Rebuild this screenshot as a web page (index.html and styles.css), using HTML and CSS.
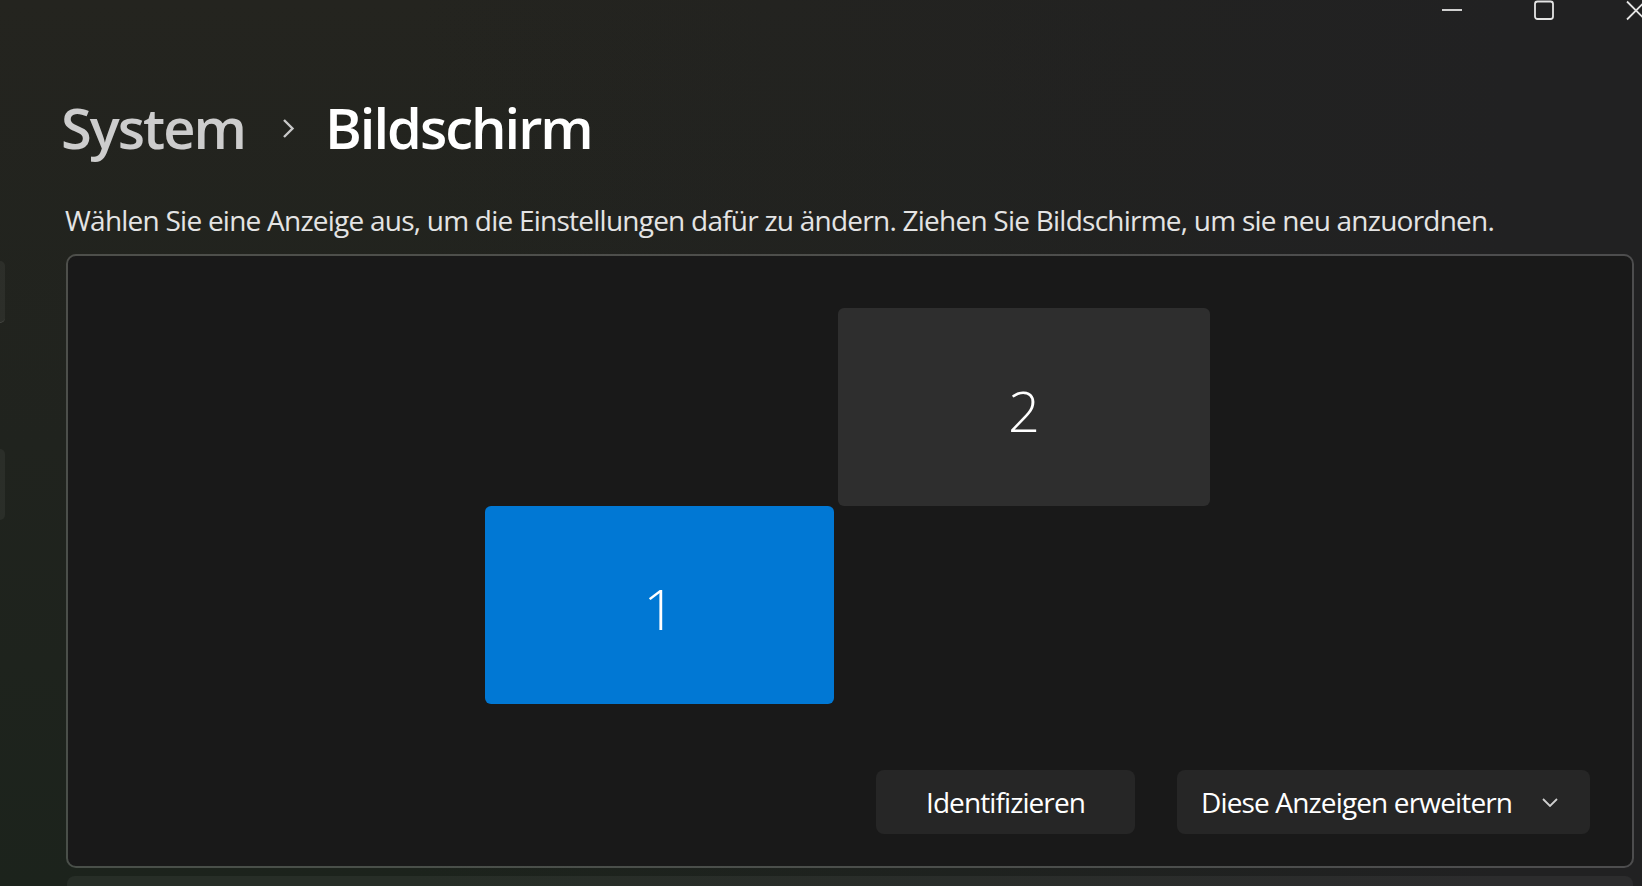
FILE: index.html
```html
<!DOCTYPE html>
<html lang="de">
<head>
<meta charset="utf-8">
<title>Bildschirm</title>
<link rel="stylesheet" href="styles.css">
</head>
<body>
<div class="window">
  <div class="caption">
    <div class="cap-btn">
      <svg class="cap-glyph" viewBox="0 0 20 20" width="20" height="20"><line x1="0" y1="9" x2="20" y2="9"/></svg>
    </div>
    <div class="cap-btn">
      <svg class="cap-glyph" viewBox="0 0 20 20" width="20" height="20"><rect x="1" y="0.5" width="18" height="17.5" rx="2.5"/></svg>
    </div>
    <div class="cap-btn">
      <svg class="cap-glyph" viewBox="0 0 20 20" width="20" height="20"><path d="M1 0.5 L19 18.5 M19 0.5 L1 18.5"/></svg>
    </div>
  </div>
  <div class="body">
    <nav class="nav">
      <div class="nav-pill nav-pill-a"></div>
      <div class="nav-pill nav-pill-b"></div>
    </nav>
    <main class="main">
      <h1 class="breadcrumb">
        <span class="crumb-parent">System</span>
        <svg class="crumb-sep" viewBox="0 0 13 21" width="13" height="21"><path d="M2 2 L10.5 10.5 L2 19"/></svg>
        <span class="crumb-current">Bildschirm</span>
      </h1>
      <p class="desc">Wählen Sie eine Anzeige aus, um die Einstellungen dafür zu ändern. Ziehen Sie Bildschirme, um sie neu anzuordnen.</p>
      <section class="panel">
        <div class="canvas">
          <div class="monitor monitor-1">1</div>
          <div class="monitor monitor-2">2</div>
        </div>
        <div class="actions">
          <button class="btn btn-identify">Identifizieren</button>
          <button class="btn btn-dropdown"><span>Diese Anzeigen erweitern</span><svg class="dd-chevron" viewBox="0 0 16 9" width="16" height="9"><path d="M1 1 L8 8 L15 1"/></svg></button>
        </div>
      </section>
      <div class="card-next"></div>
    </main>
  </div>
</div>
</body>
</html>
```
FILE: styles.css
```css
* { box-sizing: border-box; }

html, body {
  margin: 0;
  padding: 0;
  width: 1642px;
  height: 886px;
  overflow: hidden;
  background: #212122;
}

.window {
  width: 1642px;
  height: 886px;
  overflow: hidden;
  display: flex;
  flex-direction: column;
  font-family: "Open Sans", "Noto Sans", sans-serif;
  color: #ffffff;
  background:
    linear-gradient(90deg, rgba(33,33,34,0) 0%, rgba(33,33,34,0) 25%, rgba(33,33,34,1) 92%),
    linear-gradient(180deg, #24241f 0%, #20231e 50%, #1c231c 100%);
}

/* caption buttons */
.caption {
  display: flex;
  justify-content: flex-end;
  height: 21px;
  padding-top: 1px;
  margin-right: -40px;
  flex-shrink: 0;
}
.cap-btn {
  width: 92px;
  height: 20px;
  display: flex;
  justify-content: center;
  align-items: flex-start;
}
.cap-glyph {
  fill: none;
  stroke: #e4e4e4;
  stroke-width: 1.8;
  overflow: visible;
}

.body {
  flex: 1;
  display: flex;
  min-height: 0;
}

/* collapsed nav */
.nav {
  width: 5px;
  flex-shrink: 0;
  display: flex;
  flex-direction: column;
  padding-top: 240px;
}
.nav-pill {
  width: 5px;
  background: rgba(255,255,255,0.05);
  border-radius: 0 8px 8px 0;
}
.nav-pill-a {
  height: 62px;
  border-bottom: 1px solid rgba(255,255,255,0.12);
}
.nav-pill-b {
  height: 71px;
  margin-top: 126px;
}

.main {
  flex: 1;
  padding: 68px 8px 0 61px;
  display: flex;
  flex-direction: column;
  min-width: 0;
}

.breadcrumb {
  margin: 0 0 0 -5px;
  display: flex;
  align-items: center;
  font-size: 56px;
  line-height: 76px;
  font-weight: 600;
  letter-spacing: -2px;
  height: 76px;
}
.crumb-parent { color: #cdcdcd; }
.crumb-current { color: #ffffff; }
.crumb-sep {
  fill: none;
  stroke: #c8c8c8;
  stroke-width: 2.4;
  margin: 3px 30px 0 37px;
  flex-shrink: 0;
}

.desc {
  margin: 35px 0 14px -1px;
  font-size: 28px;
  line-height: 40px;
  letter-spacing: -0.76px;
  color: #e4e4e4;
  white-space: nowrap;
}

.panel {
  height: 614px;
  flex-shrink: 0;
  border: 2px solid rgba(255,255,255,0.2);
  border-radius: 10px;
  background: #191919;
  background-clip: padding-box;
  display: flex;
  flex-direction: column;
}

.canvas {
  flex: 1;
  position: relative;
}

.monitor {
  position: absolute;
  height: 198px;
  border-radius: 6px;
  display: flex;
  align-items: center;
  justify-content: center;
  padding-top: 5px;
  font-size: 56px;
  font-weight: 300;
  line-height: 1;
  color: #ffffff;
}
.monitor-1 {
  left: 417px;
  top: 250px;
  width: 349px;
  background: #0178d4;
}
.monitor-2 {
  left: 770px;
  top: 52px;
  width: 372px;
  background: #2e2e2e;
}

.actions {
  display: flex;
  justify-content: flex-end;
  gap: 42px;
  padding: 0 42px 32px 0;
}

.btn {
  height: 64px;
  border: none;
  border-radius: 8px;
  background: #262626;
  color: #ffffff;
  font-family: "Open Sans", "Noto Sans", sans-serif;
  font-size: 28px;
  letter-spacing: -0.9px;
  display: flex;
  align-items: center;
  padding: 0;
}
.btn-identify {
  width: 259px;
  justify-content: center;
}
.btn-dropdown {
  width: 413px;
  justify-content: space-between;
  padding: 0 32px 0 24px;
  letter-spacing: -0.85px;
}
.dd-chevron {
  fill: none;
  stroke: #cfcfcf;
  stroke-width: 1.8;
  flex-shrink: 0;
}

.card-next {
  margin: 8px 1px 0 1px;
  height: 80px;
  border-radius: 8px;
  background: rgba(255,255,255,0.05);
  flex-shrink: 0;
}
```
